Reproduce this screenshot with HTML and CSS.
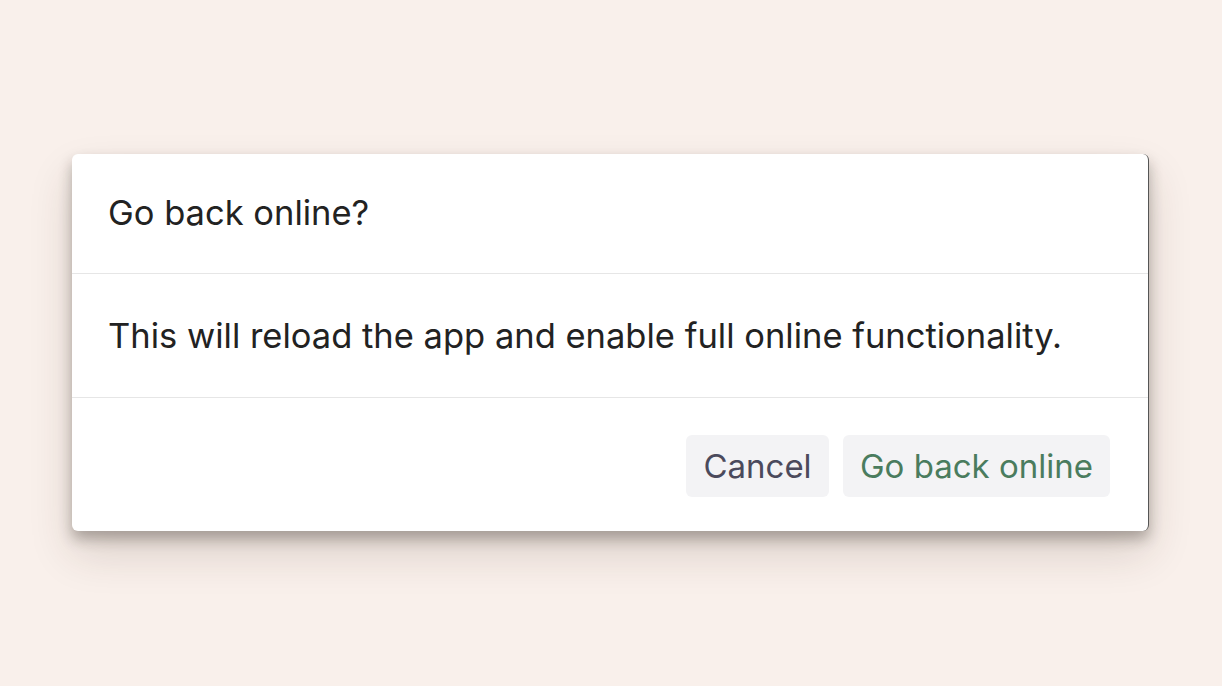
FILE: index.html
```html
<!DOCTYPE html>
<html>
<head>
<meta charset="utf-8">
<link rel="stylesheet" href="styles.css">
</head>
<body>
<div class="stage">
  <div class="dialog">
    <div class="header">Go back online?</div>
    <div class="content">This will reload the app and enable full online functionality.</div>
    <div class="footer">
      <button class="btn cancel">Cancel</button>
      <button class="btn confirm">Go back online</button>
    </div>
  </div>
</div>
</body>
</html>
```
FILE: styles.css
```css
html, body {
  margin: 0;
  padding: 0;
  background: #f9f0eb;
  font-family: Inter, "Liberation Sans", Arial, sans-serif;
}
.stage {
  width: 1222px;
  height: 686px;
  padding: 154px 0 0 72px;
  box-sizing: border-box;
}
.dialog {
  width: 1077px;
  background: #fff;
  border-radius: 6px;
  border-right: 1px solid #555;
  box-sizing: border-box;
  box-shadow: 0 22px 44px rgba(60, 40, 25, 0.16), 0 8px 14px rgba(30, 25, 20, 0.3);
  color: #222;
}
.header {
  height: 120px;
  box-sizing: border-box;
  padding: 0 36px 2px;
  display: flex;
  align-items: center;
  font-size: 34.5px;
  border-bottom: 1px solid #e6e6e6;
}
.content {
  height: 124px;
  box-sizing: border-box;
  padding: 0 36px;
  display: flex;
  align-items: center;
  font-size: 34.5px;
  border-bottom: 1px solid #e6e6e6;
}
.footer {
  height: 133px;
  box-sizing: border-box;
  padding: 37px 38px 0 36px;
  display: flex;
  justify-content: flex-end;
  align-items: flex-start;
  gap: 14px;
}
.btn {
  height: 62px;
  border: none;
  border-radius: 6px;
  background: #f3f3f5;
  font-family: Inter, "Liberation Sans", Arial, sans-serif;
  font-size: 33px;
  padding: 0;
  cursor: pointer;
}
.cancel {
  color: #4b4a5c;
  width: 143px;
}
.confirm {
  color: #4a7c5e;
  width: 267px;
}
```
